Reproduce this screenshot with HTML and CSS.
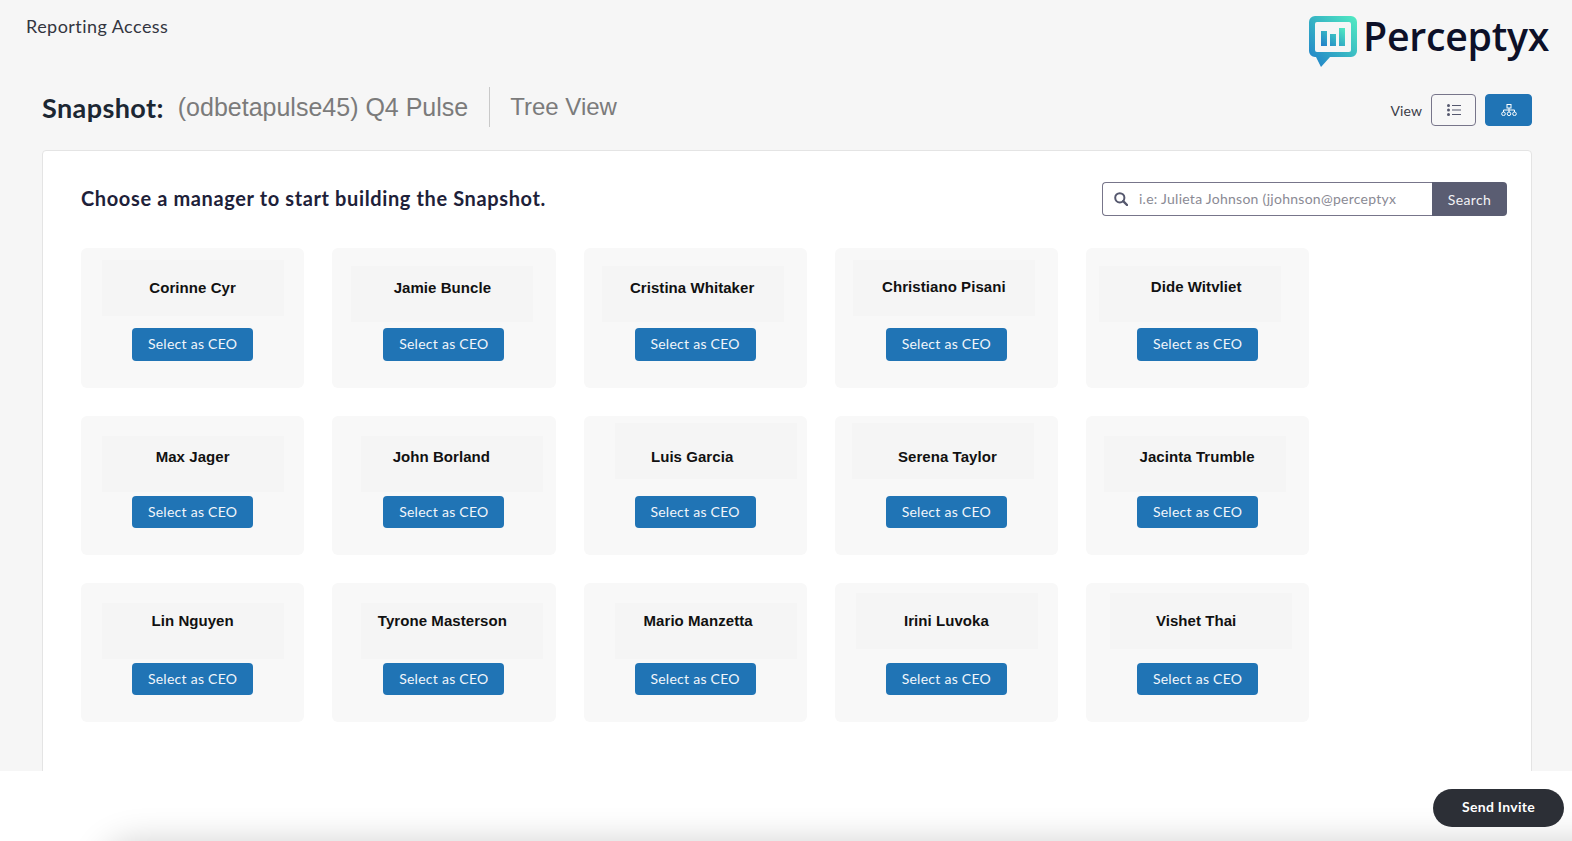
FILE: index.html
```html
<!DOCTYPE html>
<html lang="en">
<head>
<meta charset="utf-8">
<title>Reporting Access</title>
<link rel="stylesheet" href="styles.css">
</head>
<body>
<main class="page">
  <header class="topbar">
    <div class="crumb">Reporting Access</div>
    <div class="logo">
      <svg class="logo-mark" viewBox="0 0 48 51" width="48" height="51" aria-hidden="true">
        <defs>
          <linearGradient id="lg" x1="0" y1="1" x2="1" y2="0">
            <stop offset="0" stop-color="#1f7dca"/>
            <stop offset="0.5" stop-color="#36b3c4"/>
            <stop offset="1" stop-color="#52ecc2"/>
          </linearGradient>
        </defs>
        <path fill="url(#lg)" fill-rule="evenodd" d="M6 0H42A6 6 0 0 1 48 6V35A6 6 0 0 1 42 41H21L12 51L7 41H6A6 6 0 0 1 0 35V6A6 6 0 0 1 6 0ZM8 6A2 2 0 0 0 6 8V34A2 2 0 0 0 8 36H40A2 2 0 0 0 42 34V8A2 2 0 0 0 40 6Z"/>
        <path fill="url(#lg)" d="M12 15H18V30H12ZM21 18H27V30H21ZM30 12H36V30H30Z"/>
      </svg>
      <span class="logo-text">Perceptyx</span>
    </div>
  </header>

  <section class="title-row">
    <h1 class="title"><strong>Snapshot:</strong><span class="title-name">(odbetapulse45) Q4 Pulse</span></h1>
    <span class="title-view">Tree View</span>
    <div class="view-switch">
      <span class="view-label">View</span>
      <button class="view-btn" type="button" aria-label="List view">
        <svg viewBox="0 0 14 12" width="14" height="12" aria-hidden="true">
          <circle cx="1.5" cy="1.5" r="1.5" fill="#55586e"/><circle cx="1.5" cy="6" r="1.5" fill="#55586e"/><circle cx="1.5" cy="10.5" r="1.5" fill="#55586e"/>
          <path d="M5 1.5H14M5 6H14M5 10.5H14" stroke="#55586e" stroke-width="1.2" fill="none"/>
        </svg>
      </button>
      <button class="view-btn view-btn-active" type="button" aria-label="Tree view">
        <svg viewBox="0 0 16 12" width="16" height="12" aria-hidden="true" fill="none" stroke="#fff" stroke-width="1">
          <rect x="6" y=".5" width="4" height="3.5"/>
          <path d="M8 4V6M2.5 8V6H13.5V8M8 6V8"/>
          <circle cx="2.5" cy="9.8" r="1.8"/><circle cx="8" cy="9.8" r="1.8"/><circle cx="13.5" cy="9.8" r="1.8"/>
        </svg>
      </button>
    </div>
  </section>

  <section class="panel">
    <div class="panel-head">
      <h2 class="panel-title">Choose a manager to start building the Snapshot.</h2>
      <form class="search">
        <div class="search-field">
          <svg viewBox="0 0 14 14" width="14" height="14" aria-hidden="true" fill="none" stroke="#55586e" stroke-width="2">
            <circle cx="5.8" cy="5.8" r="4.6"/><path d="M9.2 9.2L13 13" stroke-linecap="round" stroke-width="2.4"/>
          </svg>
          <span class="search-hint">i.e: Julieta Johnson (jjohnson@perceptyx</span>
        </div>
        <button class="search-btn" type="button">Search</button>
      </form>
    </div>

    <div class="cards">
      <article class="card c1"><div class="patch"></div><div class="name">Corinne Cyr</div><button class="ceo" type="button">Select as CEO</button></article>
      <article class="card c2"><div class="patch"></div><div class="name">Jamie Buncle</div><button class="ceo" type="button">Select as CEO</button></article>
      <article class="card c3"><div class="patch"></div><div class="name">Cristina Whitaker</div><button class="ceo" type="button">Select as CEO</button></article>
      <article class="card c4"><div class="patch"></div><div class="name">Christiano Pisani</div><button class="ceo" type="button">Select as CEO</button></article>
      <article class="card c5"><div class="patch"></div><div class="name">Dide Witvliet</div><button class="ceo" type="button">Select as CEO</button></article>
      <article class="card c6"><div class="patch"></div><div class="name">Max Jager</div><button class="ceo" type="button">Select as CEO</button></article>
      <article class="card c7"><div class="patch"></div><div class="name">John Borland</div><button class="ceo" type="button">Select as CEO</button></article>
      <article class="card c8"><div class="patch"></div><div class="name">Luis Garcia</div><button class="ceo" type="button">Select as CEO</button></article>
      <article class="card c9"><div class="patch"></div><div class="name">Serena Taylor</div><button class="ceo" type="button">Select as CEO</button></article>
      <article class="card c10"><div class="patch"></div><div class="name">Jacinta Trumble</div><button class="ceo" type="button">Select as CEO</button></article>
      <article class="card c11"><div class="patch"></div><div class="name">Lin Nguyen</div><button class="ceo" type="button">Select as CEO</button></article>
      <article class="card c12"><div class="patch"></div><div class="name">Tyrone Masterson</div><button class="ceo" type="button">Select as CEO</button></article>
      <article class="card c13"><div class="patch"></div><div class="name">Mario Manzetta</div><button class="ceo" type="button">Select as CEO</button></article>
      <article class="card c14"><div class="patch"></div><div class="name">Irini Luvoka</div><button class="ceo" type="button">Select as CEO</button></article>
      <article class="card c15"><div class="patch"></div><div class="name">Vishet Thai</div><button class="ceo" type="button">Select as CEO</button></article>
    </div>
  </section>
</main>

<footer class="footer">
  <button class="send" type="button">Send Invite</button>
</footer>
</body>
</html>
```

FILE: styles.css
```css
* { box-sizing: border-box; }

html, body {
  margin: 0;
  height: 100%;
  overflow: hidden;
}

body {
  display: flex;
  flex-direction: column;
  background: #fff;
  font-family: "Lato", "Open Sans", sans-serif;
  color: #2c2f3a;
}

button { font-family: inherit; cursor: pointer; }

.page {
  height: 771px;
  flex: none;
  background: #f6f6f6;
  overflow: hidden;
}

/* top bar */
.topbar {
  height: 87px;
  display: flex;
  justify-content: space-between;
  align-items: flex-start;
  padding: 16px 26px 0 26px;
}

.crumb {
  font-size: 18px;
  line-height: 20px;
  color: #33353f;
  letter-spacing: .45px;
}

.logo {
  display: flex;
  align-items: flex-start;
  gap: 6px;
  margin: 0 -3px 0 0;
}

.logo-mark { display: block; }

.logo-text {
  font-family: "Open Sans", sans-serif;
  font-weight: 600;
  font-size: 39.3px;
  line-height: 41px;
  color: #0d1028;
  letter-spacing: -.3px;
}

/* title row */
.title-row {
  height: 40px;
  margin: 0 40px 23px 42px;
  display: flex;
  align-items: center;
}

.title {
  margin: 0;
  height: 40px;
  display: flex;
  align-items: center;
  font-size: 27px;
  font-weight: 400;
  border-right: 1px solid #c9c9c9;
  padding-right: 21px;
}

.title strong {
  font-family: "Lato", sans-serif;
  font-weight: 700;
  color: #1c2733;
  letter-spacing: .4px;
}

.title-name {
  font-family: "Liberation Sans", sans-serif;
  font-size: 25px;
  color: #7b7b7b;
  margin-left: 14px;
}

.title-view {
  font-family: "Liberation Sans", sans-serif;
  font-size: 24px;
  color: #7b7b7b;
  margin-left: 20px;
}

.view-switch {
  margin: 6px 0 0 auto;
  display: flex;
  align-items: center;
}

.view-label {
  font-size: 14px;
  color: #3b3d48;
  margin-right: 9px;
  letter-spacing: .1px;
}

.view-btn {
  width: 45px;
  height: 32px;
  padding: 0;
  background: #f7f7f7;
  border: 1px solid #77758a;
  border-radius: 4px;
  display: flex;
  align-items: center;
  justify-content: center;
}

.view-btn-active {
  width: 47px;
  margin-left: 9px;
  background: #2074b5;
  border-color: #2074b5;
}

/* panel */
.panel {
  height: 640px;
  margin: 0 40px 0 42px;
  padding: 31px 24px 0 38px;
  background: #fff;
  border: 1px solid #e4e4e4;
  border-radius: 4px 4px 0 0;
}

.panel-head {
  display: flex;
  justify-content: space-between;
  align-items: center;
  height: 34px;
  margin-bottom: 32px;
}

.panel-title {
  margin: 0;
  font-size: 20px;
  font-weight: 700;
  color: #1e2139;
  letter-spacing: .62px;
  position: relative;
  top: -1px;
}

.search {
  display: flex;
  height: 34px;
  margin: 0;
}

.search-field {
  width: 330px;
  display: flex;
  align-items: center;
  gap: 11px;
  padding-left: 11px;
  background: #fff;
  border: 1px solid #77758a;
  border-right: 0;
  border-radius: 4px 0 0 4px;
}

.search-hint {
  font-size: 14px;
  line-height: 14px;
  padding-bottom: 1px;
  color: #8a8a94;
  letter-spacing: .26px;
  white-space: nowrap;
}

.search-btn {
  width: 75px;
  padding: 0;
  border: 0;
  background: #5a5d72;
  color: #f2f2f5;
  font-size: 14px;
  letter-spacing: .4px;
  border-radius: 0 4px 4px 0;
}

/* cards */
.cards {
  display: grid;
  grid-template-columns: repeat(5, 223.25px);
  grid-template-rows: 140px 139px 139px;
  gap: 28px;
}

.card {
  position: relative;
  display: flex;
  flex-direction: column;
  align-items: center;
  background: #f8f8f8;
  border-radius: 6px;
  padding-top: 28px;
}

.patch {
  position: absolute;
  left: var(--px);
  top: var(--py);
  width: 182px;
  height: 56px;
  background: #f5f5f5;
}

.name {
  position: relative;
  height: 24px;
  margin-bottom: 28px;
  font-family: "Liberation Sans", sans-serif;
  font-weight: 700;
  font-size: 15px;
  line-height: 24px;
  letter-spacing: .06px;
  color: #111;
  white-space: nowrap;
  transform: translate(var(--nx), var(--ny));
}

.ceo {
  position: relative;
  width: 121px;
  height: 32px;
  padding: 0 0 1px;
  border: 0;
  border-radius: 4px;
  background: #2074b5;
  color: #f1f6fb;
  font-size: 14px;
  letter-spacing: .27px;
}

.c1  { --px: 21px; --py: 12px; --nx: 0;     --ny: 0; }
.c2  { --px: 19px; --py: 18px; --nx: -1.5px; --ny: 0; }
.c3  { --px: 18px; --py: 18px; --nx: -3px;  --ny: 0; }
.c4  { --px: 18px; --py: 12px; --nx: -2.5px; --ny: -1px; }
.c5  { --px: 13px; --py: 18px; --nx: -1.5px; --ny: -1px; }
.c6  { --px: 21px; --py: 20px; --nx: 0;     --ny: .5px; }
.c7  { --px: 29px; --py: 20px; --nx: -2.5px; --ny: .5px; }
.c8  { --px: 31px; --py: 7px;  --nx: -3px;  --ny: .5px; }
.c9  { --px: 17px; --py: 7px;  --nx: 1px;   --ny: .5px; }
.c10 { --px: 18px; --py: 20px; --nx: -.5px; --ny: .5px; }
.c11 { --px: 21px; --py: 20px; --nx: 0;     --ny: -2.5px; }
.c12 { --px: 29px; --py: 20px; --nx: -1.5px; --ny: -2.5px; }
.c13 { --px: 31px; --py: 20px; --nx: 3px;   --ny: -2.5px; }
.c14 { --px: 21px; --py: 10px; --nx: 0;     --ny: -2.5px; }
.c15 { --px: 24px; --py: 10px; --nx: -1.5px; --ny: -2.5px; }

.c1 .ceo, .c2 .ceo, .c3 .ceo, .c4 .ceo, .c5 .ceo { height: 33px; padding-bottom: 3px; }

/* footer */
.footer {
  position: relative;
  flex: 1;
  display: flex;
  justify-content: flex-end;
  align-items: flex-start;
  padding: 18px 8px 0 0;
  overflow: hidden;
  background: #fff;
}

.footer::after {
  content: "";
  position: absolute;
  left: 115px;
  right: -60px;
  top: 84px;
  height: 40px;
  border-radius: 30px;
  background: #ccc;
  box-shadow: 0 0 36px 12px rgba(0, 0, 0, .2);
}

.send {
  position: relative;
  z-index: 1;
  width: 131px;
  height: 38px;
  padding: 0 0 3px;
  border: 0;
  border-radius: 19px;
  background: #2c2f36;
  color: #fff;
  font-size: 14px;
  font-weight: 700;
  letter-spacing: .3px;
}
```
